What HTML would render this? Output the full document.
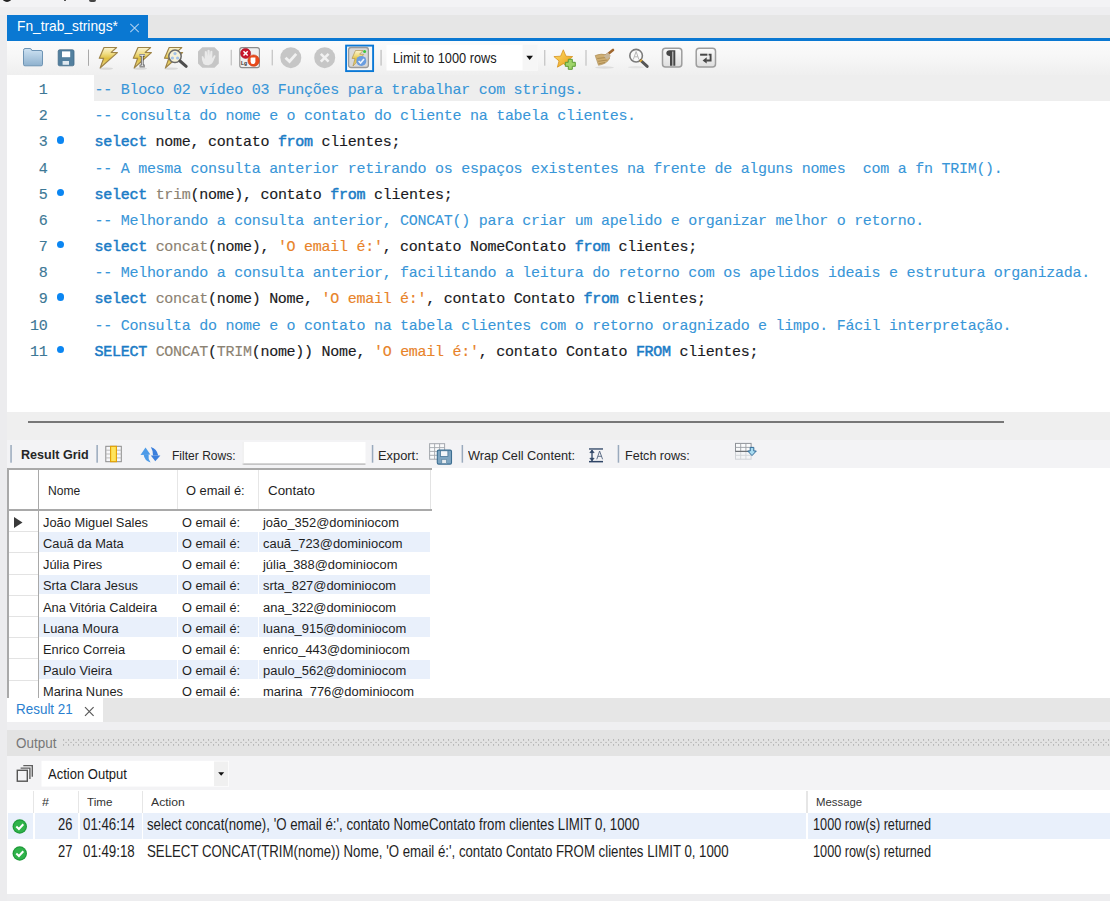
<!DOCTYPE html>
<html><head><meta charset="utf-8">
<style>
*{margin:0;padding:0;box-sizing:border-box}
html,body{width:1110px;height:901px;overflow:hidden;background:#ececee;font-family:"Liberation Sans",sans-serif;color:#1e1e1e}
.a{position:absolute}
.t{position:absolute;white-space:pre;line-height:1}
.code{font-family:"Liberation Mono",monospace;font-size:15px;letter-spacing:-0.27px;padding-top:3px;white-space:pre;position:absolute;left:94.5px;line-height:26.18px;height:26.18px}
.ln{font-family:"Liberation Mono",monospace;font-size:15px;letter-spacing:-0.27px;padding-top:3px;position:absolute;width:47.5px;left:0;text-align:right;line-height:26.18px;color:#3d7896}
.dot{position:absolute;left:56.8px;width:7.4px;height:7.4px;border-radius:50%;background:#0b86f2}
.code span{-webkit-text-stroke:0.15px currentColor}
.c{color:#3896d8}
.code span.c{-webkit-text-stroke:0.1px currentColor}
.k{color:#1b7cc6}
.code span.k{-webkit-text-stroke:0.5px currentColor}
.i{color:#1a1a22}
.f{color:#8c8272}
.s{color:#e8832a}
.ln{-webkit-text-stroke:0.15px currentColor}
</style></head><body>
<div class="a" style="left:0.00px;top:0.00px;width:1110.00px;height:7.00px;background:#f3f3f5;"></div>
<div class="a" style="left:0.00px;top:7.00px;width:1110.00px;height:8.00px;background:#eeeef0;"></div>
<div class="a" style="left:2px;top:-8px;width:10px;height:10px;border-radius:50%;background:#222"></div>
<div class="a" style="left:64.00px;top:0.00px;width:2.00px;height:1.00px;background:#555;"></div>
<div class="a" style="left:89px;top:0;width:7px;height:2px;background:#444;border-radius:0 0 3px 3px"></div>
<div class="a" style="left:7.00px;top:15.00px;width:1103.00px;height:23.00px;background:#e6e6e6;"></div>
<div class="a" style="left:7.00px;top:15.00px;width:141.00px;height:26.00px;background:#0a78d2;"></div>
<div class="a" style="left:7.00px;top:38.00px;width:1103.00px;height:3.00px;background:#0a78d2;"></div>
<div class="t" style="left:16.90px;top:17.90px;font-size:15.00px;color:#ffffff;transform:scaleX(0.9171);transform-origin:0 0;">Fn_trab_strings*</div>
<svg class="a" style="left:129px;top:23px" width="11" height="10" viewBox="0 0 11 10"><path d="M1.3 0.8L9.8 9.2M9.8 0.8L1.3 9.2" stroke="#a9cdef" stroke-width="1.1"/></svg>
<div class="a" style="left:7.00px;top:41.00px;width:1103.00px;height:34.00px;background:linear-gradient(#fbfbfb,#f7f7f7 45%,#efefef);"></div>
<svg class="a" style="left:0;top:0" width="1110" height="80" viewBox="0 0 1110 80">
<defs>
<linearGradient id="gFold" x1="0" y1="0" x2="0" y2="1"><stop offset="0" stop-color="#cfe3f3"/><stop offset="1" stop-color="#8eb1ce"/></linearGradient>
<linearGradient id="gBolt" x1="0" y1="0" x2="0" y2="1"><stop offset="0" stop-color="#fbf4d2"/><stop offset="0.3" stop-color="#f1de86"/><stop offset="0.55" stop-color="#dfbf3f"/><stop offset="1" stop-color="#efdc90"/></linearGradient>
<linearGradient id="gBtn" x1="0" y1="0" x2="0" y2="1"><stop offset="0" stop-color="#fbfbfb"/><stop offset="1" stop-color="#dedede"/></linearGradient>
<linearGradient id="gStar" x1="0" y1="0" x2="1" y2="1"><stop offset="0" stop-color="#ffe070"/><stop offset="1" stop-color="#e79a10"/></linearGradient>

</defs>
<!-- folder -->
<path d="M23.5 50.5Q23.5 48.5 25 48.5L30 48.5Q31.5 48.5 31.8 50.5L41 50.5Q42.5 50.5 42.5 52L42.5 64.5Q42.5 65.8 41 65.8L25 65.8Q23.5 65.8 23.5 64.5Z" fill="url(#gFold)" stroke="#6e94b4" stroke-width="1"/>
<!-- save -->
<rect x="58.2" y="49.8" width="15.8" height="16" rx="1.5" fill="#53809f" stroke="#426b88" stroke-width="0.8"/>
<rect x="62" y="51.4" width="8.2" height="5.8" fill="#fff"/>
<rect x="62.6" y="61" width="6.4" height="3.8" fill="#dfe8ef"/>
<rect x="88" y="49.6" width="1" height="16.2" fill="#a9a9a9"/>
<!-- bolts -->
<ellipse cx="106" cy="68.6" rx="7" ry="1.1" fill="#d9d9d9"/><ellipse cx="140" cy="68.6" rx="7" ry="1.1" fill="#d9d9d9"/><ellipse cx="171" cy="68.6" rx="7" ry="1.1" fill="#d9d9d9"/>
<path d="M104 47.5L116.6 47.5L111.2 52.4L117.4 52.6L100.3 67.8L103.6 58.4L99.3 58.2Z" fill="url(#gBolt)" stroke="#9e8447" stroke-width="1.2" stroke-linejoin="round"/>
<g transform="translate(34 0)"><path d="M104 47.5L116.6 47.5L111.2 52.4L117.4 52.6L100.3 67.8L103.6 58.4L99.3 58.2Z" fill="url(#gBolt)" stroke="#9e8447" stroke-width="1.2" stroke-linejoin="round"/></g>
<path d="M139.6 55.2L144.9 55.2M142.2 55.2L142.2 66M139.6 66L144.9 66" stroke="#333" stroke-width="2.6"/>
<path d="M139.6 55.2L144.9 55.2M142.2 55.2L142.2 66M139.6 66L144.9 66" stroke="#f4f4f4" stroke-width="1.2"/>
<g transform="translate(65.2 0)"><path d="M104 47.5L116.6 47.5L111.2 52.4L117.4 52.6L100.3 67.8L103.6 58.4L99.3 58.2Z" fill="url(#gBolt)" stroke="#9e8447" stroke-width="1.2" stroke-linejoin="round"/></g>
<circle cx="175" cy="56.3" r="6.2" fill="#f6f1d8" stroke="#6a6a6a" stroke-width="1.5"/>
<circle cx="175" cy="53.6" r="1.6" fill="#a3c2e8"/><circle cx="172.4" cy="58" r="1.6" fill="#a3c2e8"/><circle cx="177.6" cy="58" r="1.6" fill="#a3c2e8"/>
<path d="M180 61L186.2 66.3" stroke="#4e4e4e" stroke-width="3" stroke-linecap="round"/>
<!-- stop -->
<path d="M202.3 47.3L214.5 47.3L218.8 51.6L218.8 63.5L214.5 67.8L202.3 67.8L198 63.5L198 51.6Z" fill="#c6c6c6"/>
<path d="M203.5 64Q201.5 60 201.7 56.5L203 56L204.6 59L204.8 51.5Q205.8 50.4 206.8 51.5L207.3 56L207.5 50.3Q208.5 49.3 209.6 50.3L209.9 56L210.4 51.2Q211.4 50.3 212.4 51.3L212.3 58.2L214 55.5Q215.3 55 215.6 56L213 62Q211.5 65 208.5 65.3Q205 65.3 203.5 64Z" fill="#e9e9e9"/>
<rect x="230.6" y="49.8" width="1.4" height="15.6" fill="#c9c9c9"/>
<!-- error log -->
<rect x="239.8" y="47.6" width="19.6" height="20" rx="2.2" fill="#efefef" stroke="#8c8c8c" stroke-width="1.1"/>
<circle cx="245.6" cy="53.4" r="5" fill="#c8142a" stroke="#a50f20" stroke-width="0.6"/>
<path d="M243.5 51.3L247.7 55.5M247.7 51.3L243.5 55.5" stroke="#fff" stroke-width="1.5"/>
<circle cx="253.6" cy="60.6" r="5.7" fill="#e84a1c" stroke="#c93a10" stroke-width="0.6"/>
<path d="M250.6 58.6Q250.6 57.6 251.6 57.6L255.4 57.6L255.4 61.2Q255.4 64 252.8 64Q250.6 64 250.6 61.5Z" fill="#fff"/>
<text x="241" y="65.3" font-family="Liberation Sans" font-size="5" font-weight="bold" fill="#2a2a2a">Lg</text>
<rect x="271.6" y="49.8" width="1.4" height="15.6" fill="#c9c9c9"/>
<!-- check / x circles -->
<circle cx="290.8" cy="57.7" r="10.5" fill="#c6c6c6"/>
<path d="M285.5 57.8L289.5 61.5L296.2 53.8" stroke="#f1f1f1" stroke-width="2.8" fill="none"/>
<circle cx="324.7" cy="57.7" r="10.5" fill="#c6c6c6"/>
<path d="M320.8 53.8L328.6 61.6M328.6 53.8L320.8 61.6" stroke="#f1f1f1" stroke-width="2.6"/>
<!-- toggled autocommit -->
<rect x="346.1" y="45.6" width="27" height="25.5" fill="#f7f7f7" stroke="#0a78d6" stroke-width="1.9"/>
<rect x="348.6" y="47.5" width="19.8" height="20" rx="2.5" fill="#d9d9d9" stroke="#9b9b9b" stroke-width="1.3"/>
<path d="M355.5 50.5L363 50.5L359.6 54.2L363.8 54.4L353 66L355 58.6L352 58.4Z" fill="url(#gBolt)" stroke="#b09552" stroke-width="0.7"/>
<circle cx="361.3" cy="60.9" r="5" fill="#6a9de0"/>
<path d="M358.6 61L360.6 63L364 59" stroke="#eef4fc" stroke-width="1.6" fill="none"/>
<circle cx="364.6" cy="51.5" r="1.5" fill="#3dc43d"/>
<rect x="380.3" y="49.9" width="1.6" height="15.7" fill="#cacaca"/>
<!-- limit combo -->
<rect x="386.5" y="44.8" width="151.2" height="25.7" fill="#fff"/>
<rect x="522.6" y="44.8" width="15.1" height="25.7" fill="#f6f6f6"/>
<path d="M526.3 55.8L533 55.8L529.65 59.9Z" fill="#111"/>
<rect x="544" y="50" width="1.4" height="15.7" fill="#c9c9c9"/>
<!-- star -->
<path d="M563.3 49.8L566 56.2L572.7 56.6L567.6 60.9L569.2 67.2L563.3 63.7L557.4 67.2L559 60.9L553.9 56.6L560.6 56.2Z" fill="url(#gStar)" stroke="#d28a10" stroke-width="0.7" stroke-linejoin="round"/>
<path d="M568.3 59.3h4v3h3v4h-3v3h-4v-3h-3v-4h3z" fill="#9fd46a" stroke="#5d9c35" stroke-width="1"/>
<rect x="585.3" y="50" width="1.4" height="15.7" fill="#c9c9c9"/>
<!-- broom -->
<ellipse cx="604.5" cy="67.5" rx="9.5" ry="1.2" fill="#dcdcdc"/>
<path d="M595.2 55.5Q601 53 607.5 55L609.8 58Q607 64 598.5 65.3Q597 61 595.2 55.5Z" fill="#cfae72" stroke="#a88a55" stroke-width="0.6"/>
<path d="M597.3 58.5L607.5 57.3M598.2 61.3L607.2 60M598.8 63.8L605 62.5" stroke="#a8884f" stroke-width="0.9"/>
<path d="M606.5 55.3L613 50" stroke="#a0672e" stroke-width="2.6" stroke-linecap="round"/>
<rect x="604.5" y="54" width="5.5" height="4.5" transform="rotate(-40 607 56)" fill="#c9b79a"/>
<!-- find A -->
<ellipse cx="636" cy="67.2" rx="8" ry="1.1" fill="#e2e2e2"/>
<circle cx="636.1" cy="55.7" r="6.3" fill="#fafafa" stroke="#7b7b7b" stroke-width="1.6"/>
<path d="M633.3 59.5L636.1 51.5L638.9 59.5M634.3 56.8L637.9 56.8" stroke="#b7b7b7" stroke-width="1" fill="none"/>
<path d="M640.8 60.5L647.2 66.4" stroke="#555" stroke-width="3" stroke-linecap="round"/>
<path d="M640.3 60L641.6 61.3" stroke="#d9a83a" stroke-width="3"/>
<!-- pilcrow -->
<rect x="662.5" y="48.3" width="19.3" height="18.8" rx="3" fill="url(#gBtn)" stroke="#9d9d9d" stroke-width="1.5"/>
<path d="M669.6 50.2L675.3 50.2L675.3 65.8L673.3 65.8L673.3 51.4L672.4 51.4L672.4 65.8L670 65.8L670 56.2Q666.3 56 666.3 53.1Q666.4 50.2 669.6 50.2Z" fill="#474747"/>
<!-- wrap -->
<rect x="696.2" y="48.3" width="19.3" height="18.8" rx="3" fill="url(#gBtn)" stroke="#9d9d9d" stroke-width="1.5"/>
<rect x="700.1" y="53.7" width="7.3" height="2" fill="#474747"/>
<path d="M708.6 54.6L710.6 54.6L710.6 60.5L706.2 60.5" stroke="#474747" stroke-width="1.9" fill="none"/>
<path d="M702.6 60.5L706.7 57.3L706.7 63.6Z" fill="#474747"/>
</svg>
<div class="t" style="left:392.90px;top:50.13px;font-size:15.20px;color:#1a1a1a;transform:scaleX(0.8415);transform-origin:0 0;">Limit to 1000 rows</div>
<div class="a" style="left:7.00px;top:75.00px;width:1103.00px;height:337.00px;background:#fff;"></div>
<div class="a" style="left:94.00px;top:75.00px;width:1016.00px;height:26.00px;background:#eeeeee;"></div>
<div class="ln" style="top:75.00px">1</div>
<div class="code" style="top:75.00px"><span class="c">-- Bloco 02 vídeo 03 Funções para trabalhar com strings.</span></div>
<div class="ln" style="top:101.18px">2</div>
<div class="code" style="top:101.18px"><span class="c">-- consulta do nome e o contato do cliente na tabela clientes.</span></div>
<div class="ln" style="top:127.36px">3</div>
<div class="dot" style="top:136.26px"></div>
<div class="code" style="top:127.36px"><span class="k">select</span><span class="i"> nome, contato </span><span class="k">from</span><span class="i"> clientes;</span></div>
<div class="ln" style="top:153.54px">4</div>
<div class="code" style="top:153.54px"><span class="c">-- A mesma consulta anterior retirando os espaços existentes na frente de alguns nomes  com a fn TRIM().</span></div>
<div class="ln" style="top:179.72px">5</div>
<div class="dot" style="top:188.62px"></div>
<div class="code" style="top:179.72px"><span class="k">select</span><span class="i"> </span><span class="f">trim</span><span class="i">(nome), contato </span><span class="k">from</span><span class="i"> clientes;</span></div>
<div class="ln" style="top:205.90px">6</div>
<div class="code" style="top:205.90px"><span class="c">-- Melhorando a consulta anterior, CONCAT() para criar um apelido e organizar melhor o retorno.</span></div>
<div class="ln" style="top:232.08px">7</div>
<div class="dot" style="top:240.98px"></div>
<div class="code" style="top:232.08px"><span class="k">select</span><span class="i"> </span><span class="f">concat</span><span class="i">(nome), </span><span class="s">&#x27;O email é:&#x27;</span><span class="i">, contato NomeContato </span><span class="k">from</span><span class="i"> clientes;</span></div>
<div class="ln" style="top:258.26px">8</div>
<div class="code" style="top:258.26px"><span class="c">-- Melhorando a consulta anterior, facilitando a leitura do retorno com os apelidos ideais e estrutura organizada.</span></div>
<div class="ln" style="top:284.44px">9</div>
<div class="dot" style="top:293.34px"></div>
<div class="code" style="top:284.44px"><span class="k">select</span><span class="i"> </span><span class="f">concat</span><span class="i">(nome) Nome, </span><span class="s">&#x27;O email é:&#x27;</span><span class="i">, contato Contato </span><span class="k">from</span><span class="i"> clientes;</span></div>
<div class="ln" style="top:310.62px">10</div>
<div class="code" style="top:310.62px"><span class="c">-- Consulta do nome e o contato na tabela clientes com o retorno oragnizado e limpo. Fácil interpretação.</span></div>
<div class="ln" style="top:336.80px">11</div>
<div class="dot" style="top:345.70px"></div>
<div class="code" style="top:336.80px"><span class="k">SELECT</span><span class="i"> </span><span class="f">CONCAT</span><span class="i">(</span><span class="f">TRIM</span><span class="i">(nome)) Nome, </span><span class="s">&#x27;O email é:&#x27;</span><span class="i">, contato Contato </span><span class="k">FROM</span><span class="i"> clientes;</span></div>
<div class="a" style="left:7.00px;top:412.00px;width:1103.00px;height:28.00px;background:#efefef;"></div>
<div class="a" style="left:28.00px;top:421.00px;width:976.00px;height:2.00px;background:#777777;"></div>
<div class="a" style="left:7.00px;top:440.00px;width:1103.00px;height:28.00px;background:#f3f3f5;"></div>
<svg class="a" style="left:0;top:436px" width="800" height="34" viewBox="0 436 800 34">
<defs>
<linearGradient id="gCol" x1="0" y1="0" x2="1" y2="0"><stop offset="0" stop-color="#f7d23a"/><stop offset="1" stop-color="#eaa814"/></linearGradient>
</defs>
<rect x="10.3" y="445" width="1.5" height="17.7" fill="#9aaabd"/>
<rect x="96.4" y="445" width="1.5" height="17.7" fill="#9aaabd"/>
<!-- column icon -->
<rect x="105.8" y="446.3" width="15.5" height="15.4" fill="#f7f7f9" stroke="#8c8c8c" stroke-width="1"/>
<path d="M105.8 450.2h15.5M105.8 454h15.5M105.8 457.9h15.5" stroke="#b5b5b5" stroke-width="0.9"/>
<rect x="110.6" y="446.3" width="5.8" height="15.4" fill="#ffe45c" stroke="#e39f00" stroke-width="1.1"/>
<!-- refresh -->
<g><path d="M140.5 455L145.5 447.6L150.4 454.6Z" fill="#4d9be8"/>
<path d="M143.6 454.2Q144.2 460.5 150.6 462.6Q147.8 458.5 148.6 454.2Z" fill="#4d9be8"/></g>
<g><path d="M150.8 455.4L160.4 455.4L155.3 461.3Z" fill="#3b7fdc"/>
<path d="M150.8 447Q157 448.6 158.2 455.6L153 455.6Q153.2 450.8 150.8 447Z" fill="#3b7fdc"/></g>
<!-- filter input -->
<rect x="242.7" y="442" width="122.8" height="22.6" fill="#fff"/>
<rect x="242.7" y="463.4" width="122.8" height="1.4" fill="#b9b9b9"/>
<rect x="242.7" y="442" width="0.8" height="22.6" fill="#e4e4e4"/>
<rect x="371.8" y="445" width="1.5" height="17.7" fill="#9aaabd"/>
<!-- export icon -->
<rect x="429.6" y="443.7" width="15" height="15.5" fill="#fafbfc" stroke="#a3a7ad" stroke-width="1"/>
<path d="M429.6 447.6h15M429.6 451.4h15M429.6 455.3h15M434.6 443.7v15.5M439.6 443.7v15.5" stroke="#a3a7ad" stroke-width="0.9"/>
<rect x="437.3" y="450.1" width="14.2" height="14" rx="1.3" fill="#7ea5c1" stroke="#3d6e91" stroke-width="1.1"/>
<rect x="440.5" y="450.8" width="7.4" height="5.6" fill="#f3f6f9" stroke="#3d6e91" stroke-width="0.7"/>
<rect x="441.8" y="459.3" width="4.8" height="4.3" fill="#e6ebef" stroke="#4f7a99" stroke-width="0.6"/>
<rect x="461.6" y="445" width="1.5" height="17.7" fill="#9aaabd"/>
<!-- wrap icon -->
<rect x="589" y="448" width="14" height="1.9" fill="#6b7b92"/>
<rect x="589" y="460.9" width="14" height="1.5" fill="#2f4566"/>
<path d="M592 450v10.9" stroke="#3a4f70" stroke-width="1.4"/>
<path d="M589.9 452.6L592 450.3L594.1 452.6Z M589.9 458.3L592 460.6L594.1 458.3Z" fill="#2f4566" stroke="#2f4566" stroke-width="0.8"/>
<path d="M596.8 459.3L599.6 451L602.6 459.3M597.8 456.3H601.6" stroke="#52647f" stroke-width="0.9" fill="none"/>
<rect x="617.7" y="445" width="1.5" height="17.7" fill="#9aaabd"/>
<!-- fetch icon -->
<rect x="735.5" y="451.4" width="15.6" height="7.8" fill="#f3f4f6" stroke="#cfd2d7" stroke-width="1"/>
<path d="M735.5 455.3h15.6M740.7 451.4v7.8M745.9 451.4v7.8" stroke="#cfd2d7" stroke-width="0.9"/>
<rect x="735.5" y="443.4" width="15.6" height="8" fill="#fafbfc" stroke="#8e9298" stroke-width="1"/>
<path d="M735.5 447.4h15.6M740.7 443.4v8M745.9 443.4v8" stroke="#9a9ea4" stroke-width="0.9"/>
<path d="M735.5 451.4h15.6" stroke="#6e7277" stroke-width="1.2"/>
<path d="M750.2 447.4h3.6v3.6h2.5l-4.3 4.6l-4.3-4.6h2.5z" fill="#a9dbf0" stroke="#2f6a98" stroke-width="1"/>
</svg>
<div class="t" style="left:20.70px;top:449.38px;font-size:12.90px;color:#262626;font-weight:bold;transform:scaleX(0.9751);transform-origin:0 0;">Result Grid</div>
<div class="t" style="left:171.80px;top:449.50px;font-size:12.40px;color:#262626;transform:scaleX(0.9729);transform-origin:0 0;">Filter Rows:</div>
<div class="t" style="left:378.20px;top:449.60px;font-size:12.40px;color:#262626;transform:scaleX(1.0380);transform-origin:0 0;">Export:</div>
<div class="t" style="left:468.30px;top:449.60px;font-size:12.40px;color:#262626;transform:scaleX(1.0255);transform-origin:0 0;">Wrap Cell Content:</div>
<div class="t" style="left:625.30px;top:450.00px;font-size:12.40px;color:#262626;transform:scaleX(1.0124);transform-origin:0 0;">Fetch rows:</div>
<div class="a" style="left:7.00px;top:468.00px;width:1103.00px;height:230.00px;background:#fff;"></div>
<div class="a" style="left:0;top:468px;width:1110px;height:230px;overflow:hidden"><div class="a" style="left:0;top:-468px;width:1110px;height:901px"><div class="a" style="left:9.00px;top:531.20px;width:29.00px;height:1.00px;background:#e3e3e3;"></div>
<div class="a" style="left:39.00px;top:532.30px;width:138.00px;height:19.50px;background:#e9f0fb;"></div>
<div class="a" style="left:178.30px;top:532.30px;width:79.50px;height:19.50px;background:#e9f0fb;"></div>
<div class="a" style="left:259.40px;top:532.30px;width:171.00px;height:19.50px;background:#e9f0fb;"></div>
<div class="a" style="left:9.00px;top:552.40px;width:29.00px;height:1.00px;background:#e3e3e3;"></div>
<div class="a" style="left:9.00px;top:573.60px;width:29.00px;height:1.00px;background:#e3e3e3;"></div>
<div class="a" style="left:39.00px;top:574.70px;width:138.00px;height:19.50px;background:#e9f0fb;"></div>
<div class="a" style="left:178.30px;top:574.70px;width:79.50px;height:19.50px;background:#e9f0fb;"></div>
<div class="a" style="left:259.40px;top:574.70px;width:171.00px;height:19.50px;background:#e9f0fb;"></div>
<div class="a" style="left:9.00px;top:594.80px;width:29.00px;height:1.00px;background:#e3e3e3;"></div>
<div class="a" style="left:9.00px;top:616.00px;width:29.00px;height:1.00px;background:#e3e3e3;"></div>
<div class="a" style="left:39.00px;top:617.10px;width:138.00px;height:19.50px;background:#e9f0fb;"></div>
<div class="a" style="left:178.30px;top:617.10px;width:79.50px;height:19.50px;background:#e9f0fb;"></div>
<div class="a" style="left:259.40px;top:617.10px;width:171.00px;height:19.50px;background:#e9f0fb;"></div>
<div class="a" style="left:9.00px;top:637.20px;width:29.00px;height:1.00px;background:#e3e3e3;"></div>
<div class="a" style="left:9.00px;top:658.40px;width:29.00px;height:1.00px;background:#e3e3e3;"></div>
<div class="a" style="left:39.00px;top:659.50px;width:138.00px;height:19.50px;background:#e9f0fb;"></div>
<div class="a" style="left:178.30px;top:659.50px;width:79.50px;height:19.50px;background:#e9f0fb;"></div>
<div class="a" style="left:259.40px;top:659.50px;width:171.00px;height:19.50px;background:#e9f0fb;"></div>
<div class="a" style="left:9.00px;top:679.60px;width:29.00px;height:1.00px;background:#e3e3e3;"></div>
<div class="a" style="left:9.00px;top:700.80px;width:29.00px;height:1.00px;background:#e3e3e3;"></div>
<div class="a" style="left:7.00px;top:468.20px;width:424.50px;height:1.60px;background:#a9a9a9;"></div>
<div class="a" style="left:7.00px;top:509.40px;width:424.50px;height:1.60px;background:#a9a9a9;"></div>
<div class="a" style="left:177.00px;top:469.80px;width:1.00px;height:39.60px;background:#e6e6e6;"></div>
<div class="a" style="left:258.00px;top:469.80px;width:1.00px;height:39.60px;background:#e6e6e6;"></div>
<div class="a" style="left:430.30px;top:469.80px;width:1.20px;height:39.60px;background:#e3e3e3;"></div>
<div class="a" style="left:7.00px;top:468.20px;width:1.50px;height:230.00px;background:#a9a9a9;"></div>
<div class="a" style="left:37.70px;top:468.20px;width:1.40px;height:230.00px;background:#a9a9a9;"></div>
<div class="t" style="left:47.90px;top:484.40px;font-size:13.70px;color:#1e1e1e;transform:scaleX(0.8830);transform-origin:0 0;">Nome</div>
<div class="t" style="left:186.30px;top:484.40px;font-size:13.70px;color:#1e1e1e;transform:scaleX(0.9407);transform-origin:0 0;">O email é:</div>
<div class="t" style="left:267.80px;top:484.40px;font-size:13.70px;color:#1e1e1e;transform:scaleX(0.9767);transform-origin:0 0;">Contato</div>
<div class="t" style="left:43.00px;top:515.80px;font-size:13.70px;color:#1e1e1e;transform:scaleX(0.9388);transform-origin:0 0;">João Miguel Sales</div>
<div class="t" style="left:181.60px;top:515.80px;font-size:13.70px;color:#1e1e1e;transform:scaleX(0.9310);transform-origin:0 0;">O email é:</div>
<div class="t" style="left:262.92px;top:515.80px;font-size:13.70px;color:#1e1e1e;transform:scaleX(0.9442);transform-origin:0 0;">joão_352@dominiocom</div>
<div class="t" style="left:43.00px;top:537.00px;font-size:13.70px;color:#1e1e1e;transform:scaleX(0.9388);transform-origin:0 0;">Cauã da Mata</div>
<div class="t" style="left:181.60px;top:537.00px;font-size:13.70px;color:#1e1e1e;transform:scaleX(0.9310);transform-origin:0 0;">O email é:</div>
<div class="t" style="left:262.60px;top:537.00px;font-size:13.70px;color:#1e1e1e;transform:scaleX(0.9442);transform-origin:0 0;">cauã_723@dominiocom</div>
<div class="t" style="left:43.00px;top:558.20px;font-size:13.70px;color:#1e1e1e;transform:scaleX(0.9388);transform-origin:0 0;">Júlia Pires</div>
<div class="t" style="left:181.60px;top:558.20px;font-size:13.70px;color:#1e1e1e;transform:scaleX(0.9310);transform-origin:0 0;">O email é:</div>
<div class="t" style="left:262.92px;top:558.20px;font-size:13.70px;color:#1e1e1e;transform:scaleX(0.9442);transform-origin:0 0;">júlia_388@dominiocom</div>
<div class="t" style="left:43.00px;top:579.40px;font-size:13.70px;color:#1e1e1e;transform:scaleX(0.9388);transform-origin:0 0;">Srta Clara Jesus</div>
<div class="t" style="left:181.60px;top:579.40px;font-size:13.70px;color:#1e1e1e;transform:scaleX(0.9310);transform-origin:0 0;">O email é:</div>
<div class="t" style="left:262.60px;top:579.40px;font-size:13.70px;color:#1e1e1e;transform:scaleX(0.9442);transform-origin:0 0;">srta_827@dominiocom</div>
<div class="t" style="left:43.00px;top:600.60px;font-size:13.70px;color:#1e1e1e;transform:scaleX(0.9388);transform-origin:0 0;">Ana Vitória Caldeira</div>
<div class="t" style="left:181.60px;top:600.60px;font-size:13.70px;color:#1e1e1e;transform:scaleX(0.9310);transform-origin:0 0;">O email é:</div>
<div class="t" style="left:262.60px;top:600.60px;font-size:13.70px;color:#1e1e1e;transform:scaleX(0.9442);transform-origin:0 0;">ana_322@dominiocom</div>
<div class="t" style="left:43.00px;top:621.80px;font-size:13.70px;color:#1e1e1e;transform:scaleX(0.9388);transform-origin:0 0;">Luana Moura</div>
<div class="t" style="left:181.60px;top:621.80px;font-size:13.70px;color:#1e1e1e;transform:scaleX(0.9310);transform-origin:0 0;">O email é:</div>
<div class="t" style="left:262.60px;top:621.80px;font-size:13.70px;color:#1e1e1e;transform:scaleX(0.9442);transform-origin:0 0;">luana_915@dominiocom</div>
<div class="t" style="left:43.00px;top:643.00px;font-size:13.70px;color:#1e1e1e;transform:scaleX(0.9388);transform-origin:0 0;">Enrico Correia</div>
<div class="t" style="left:181.60px;top:643.00px;font-size:13.70px;color:#1e1e1e;transform:scaleX(0.9310);transform-origin:0 0;">O email é:</div>
<div class="t" style="left:262.60px;top:643.00px;font-size:13.70px;color:#1e1e1e;transform:scaleX(0.9442);transform-origin:0 0;">enrico_443@dominiocom</div>
<div class="t" style="left:43.00px;top:664.20px;font-size:13.70px;color:#1e1e1e;transform:scaleX(0.9388);transform-origin:0 0;">Paulo Vieira</div>
<div class="t" style="left:181.60px;top:664.20px;font-size:13.70px;color:#1e1e1e;transform:scaleX(0.9310);transform-origin:0 0;">O email é:</div>
<div class="t" style="left:262.60px;top:664.20px;font-size:13.70px;color:#1e1e1e;transform:scaleX(0.9442);transform-origin:0 0;">paulo_562@dominiocom</div>
<div class="t" style="left:43.00px;top:685.40px;font-size:13.70px;color:#1e1e1e;transform:scaleX(0.9388);transform-origin:0 0;">Marina Nunes</div>
<div class="t" style="left:181.60px;top:685.40px;font-size:13.70px;color:#1e1e1e;transform:scaleX(0.9310);transform-origin:0 0;">O email é:</div>
<div class="t" style="left:262.60px;top:685.40px;font-size:13.70px;color:#1e1e1e;transform:scaleX(0.9442);transform-origin:0 0;">marina_776@dominiocom</div>
<svg class="a" style="left:14px;top:517px" width="9" height="12" viewBox="0 0 9 12"><path d="M0 0L8.5 5.5L0 11Z" fill="#3a3a3a"/></svg></div></div>
<div class="a" style="left:7.00px;top:698.00px;width:1103.00px;height:24.00px;background:#e6e6e6;"></div>
<div class="a" style="left:7.00px;top:698.00px;width:96.00px;height:24.00px;background:#fff;"></div>
<div class="t" style="left:16.40px;top:701.93px;font-size:14.50px;color:#2a7fd0;transform:scaleX(0.9272);transform-origin:0 0;">Result 21</div>
<svg class="a" style="left:84px;top:706px" width="11" height="11" viewBox="0 0 11 11"><path d="M1 1.2L9.6 9.8M9.6 1.2L1 9.8" stroke="#5a5a5a" stroke-width="1.2"/></svg>
<div class="a" style="left:7.00px;top:722.00px;width:1103.00px;height:8.00px;background:#efeff1;"></div>
<div class="a" style="left:7.00px;top:730.00px;width:1103.00px;height:26.00px;background:#e3e3e3;"></div>
<div class="t" style="left:16.10px;top:734.93px;font-size:15.20px;color:#777777;transform:scaleX(0.8860);transform-origin:0 0;">Output</div>
<svg class="a" style="left:63px;top:739px" width="1047" height="7"><defs><pattern id="dots" x="0" y="0" width="5" height="5" patternUnits="userSpaceOnUse"><rect x="0" y="0.4" width="1.1" height="1.1" fill="#9c9c9c"/><rect x="2.5" y="2.9" width="1.1" height="1.1" fill="#a8a8a8"/></pattern></defs><rect x="0" y="0" width="1047" height="7" fill="url(#dots)"/></svg>
<div class="a" style="left:7.00px;top:756.00px;width:1103.00px;height:34.00px;background:#f3f3f5;"></div>
<svg class="a" style="left:0;top:750px" width="240" height="40" viewBox="0 750 240 40">
<rect x="17.3" y="770.3" width="10" height="10.9" fill="none" stroke="#555" stroke-width="1.4"/>
<path d="M20.6 768.1H29.9V779" fill="none" stroke="#606060" stroke-width="1.4"/>
<path d="M23.3 765.6H32.3V776.7" fill="none" stroke="#606060" stroke-width="1.4"/>
<rect x="41.5" y="760.8" width="187.5" height="25.8" fill="#fff"/>
<rect x="214" y="761.5" width="14.3" height="24.5" fill="#f0f0f0"/>
<path d="M218.2 772.2L224.2 772.2L221.2 775.8Z" fill="#111"/>
</svg>
<div class="t" style="left:47.60px;top:765.98px;font-size:15.50px;color:#1a1a1a;transform:scaleX(0.8400);transform-origin:0 0;">Action Output</div>
<div class="a" style="left:7.00px;top:790.00px;width:1103.00px;height:104.00px;background:#fff;"></div>
<div class="a" style="left:8.00px;top:813.20px;width:25.00px;height:26.00px;background:#e9f0fb;"></div>
<div class="a" style="left:34.50px;top:813.20px;width:43.70px;height:26.00px;background:#e9f0fb;"></div>
<div class="a" style="left:79.60px;top:813.20px;width:62.40px;height:26.00px;background:#e9f0fb;"></div>
<div class="a" style="left:143.40px;top:813.20px;width:662.90px;height:26.00px;background:#e9f0fb;"></div>
<div class="a" style="left:807.60px;top:813.20px;width:302.40px;height:26.00px;background:#e9f0fb;"></div>
<div class="a" style="left:33.00px;top:791.00px;width:1.30px;height:21.50px;background:#e6e6e6;"></div>
<div class="a" style="left:78.20px;top:791.00px;width:1.30px;height:21.50px;background:#e6e6e6;"></div>
<div class="a" style="left:142.10px;top:791.00px;width:1.30px;height:21.50px;background:#e6e6e6;"></div>
<div class="a" style="left:806.30px;top:791.00px;width:1.30px;height:21.50px;background:#e6e6e6;"></div>
<div class="t" style="left:41.80px;top:796.51px;font-size:11.80px;color:#333;transform:scaleX(1.0689);transform-origin:0 0;">#</div>
<div class="t" style="left:87.00px;top:796.51px;font-size:11.80px;color:#333;transform:scaleX(0.9851);transform-origin:0 0;">Time</div>
<div class="t" style="left:150.50px;top:796.51px;font-size:11.80px;color:#333;transform:scaleX(1.0334);transform-origin:0 0;">Action</div>
<div class="t" style="left:816.20px;top:796.51px;font-size:11.80px;color:#333;transform:scaleX(0.9643);transform-origin:0 0;">Message</div>
<div class="t" style="left:58.00px;top:815.99px;font-size:16.20px;color:#1e1e1e;transform:scaleX(0.8008);transform-origin:0 0;">26</div>
<div class="t" style="left:83.10px;top:815.99px;font-size:16.20px;color:#1e1e1e;transform:scaleX(0.8209);transform-origin:0 0;">01:46:14</div>
<div class="t" style="left:146.70px;top:815.99px;font-size:16.20px;color:#1e1e1e;transform:scaleX(0.8184);transform-origin:0 0;">select concat(nome), &#x27;O email é:&#x27;, contato NomeContato from clientes LIMIT 0, 1000</div>
<div class="t" style="left:813.00px;top:815.99px;font-size:16.20px;color:#1e1e1e;transform:scaleX(0.7852);transform-origin:0 0;">1000 row(s) returned</div>
<svg class="a" style="left:12px;top:818.70px" width="16" height="16" viewBox="0 0 16 16"><circle cx="7.75" cy="7.5" r="7.2" fill="#1f9a3a"/><circle cx="7.75" cy="7.5" r="6" fill="#2fb34a"/><path d="M4.3 7.6L6.9 10L11.3 5.2" stroke="#fff" stroke-width="2" fill="none"/></svg>
<div class="t" style="left:58.00px;top:843.19px;font-size:16.20px;color:#1e1e1e;transform:scaleX(0.8008);transform-origin:0 0;">27</div>
<div class="t" style="left:83.10px;top:843.19px;font-size:16.20px;color:#1e1e1e;transform:scaleX(0.8209);transform-origin:0 0;">01:49:18</div>
<div class="t" style="left:146.70px;top:843.19px;font-size:16.20px;color:#1e1e1e;transform:scaleX(0.8174);transform-origin:0 0;">SELECT CONCAT(TRIM(nome)) Nome, &#x27;O email é:&#x27;, contato Contato FROM clientes LIMIT 0, 1000</div>
<div class="t" style="left:813.00px;top:843.19px;font-size:16.20px;color:#1e1e1e;transform:scaleX(0.7852);transform-origin:0 0;">1000 row(s) returned</div>
<svg class="a" style="left:12px;top:845.90px" width="16" height="16" viewBox="0 0 16 16"><circle cx="7.75" cy="7.5" r="7.2" fill="#1f9a3a"/><circle cx="7.75" cy="7.5" r="6" fill="#2fb34a"/><path d="M4.3 7.6L6.9 10L11.3 5.2" stroke="#fff" stroke-width="2" fill="none"/></svg>
<div class="a" style="left:7.00px;top:894.00px;width:1103.00px;height:7.00px;background:#ededef;"></div>
</body></html>
